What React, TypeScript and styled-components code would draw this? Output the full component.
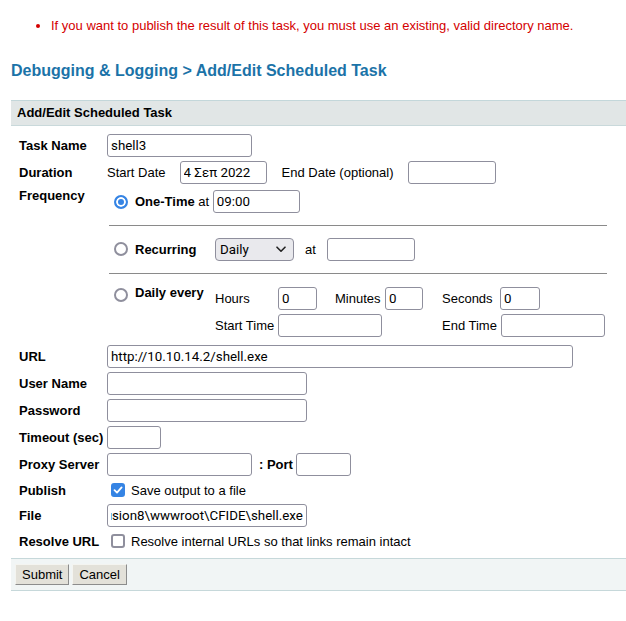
import React, { useEffect, useRef } from "react";
import styled, { createGlobalStyle } from "styled-components";

const GlobalStyle = createGlobalStyle`
  html, body { margin: 0; padding: 0; background: #fff; }
  body {
    font-family: "Liberation Sans", Arial, sans-serif;
    font-size: 13px;
    color: #000;
  }
`;

const Page = styled.div`
  padding: 18px 0 30px 11px;
`;

const Errors = styled.ul`
  margin: 0;
  padding-left: 40px;
  color: #d40000;
  line-height: 15px;
  li::marker { color: #d40000; }
`;

const Heading = styled.h2`
  margin: 28px 0 20px;
  font-size: 16px;
  line-height: 19px;
  font-weight: bold;
  color: #1b73a8;
`;

const Panel = styled.section`
  display: flex;
  flex-direction: column;
`;

const PanelTitle = styled.div`
  background: #e1e6e6;
  border-top: 1px solid #c3d7da;
  border-bottom: 1px solid #c9d9db;
  height: 24px;
  line-height: 24px;
  padding: 0 6px;
  font-weight: bold;
`;

const FormGrid = styled.div`
  display: grid;
  grid-template-columns: 88px 1fr;
  row-gap: 4px;
  padding: 8px 0 7px 8px;
`;

const Label = styled.div<{ $top?: boolean }>`
  font-weight: bold;
  line-height: 15px;
  align-self: ${(p) => (p.$top ? "start" : "center")};
  white-space: nowrap;
`;

const Field = styled.div<{ $gap?: number; $h?: number }>`
  display: flex;
  align-items: center;
  min-height: ${(p) => p.$h ?? 23}px;
  gap: ${(p) => p.$gap ?? 0}px;
  white-space: nowrap;
`;

const TextInput = styled.input<{ $w: number; $ml?: number }>`
  box-sizing: border-box;
  width: ${(p) => p.$w}px;
  height: 23px;
  margin: 0 0 0 ${(p) => p.$ml ?? 0}px;
  padding: 0 3px;
  border: 1px solid #8f8f9d;
  border-radius: 3px;
  background: #fff;
  color: #000;
  font-family: Roboto, "Noto Sans", sans-serif;
  font-size: 13.33px;
  outline: none;
`;

const Bold = styled.span<{ $ml?: number }>`
  font-weight: bold;
  margin-left: ${(p) => p.$ml ?? 0}px;
`;

const Text = styled.span<{ $ml?: number; $mr?: number }>`
  margin-left: ${(p) => p.$ml ?? 0}px;
  margin-right: ${(p) => p.$mr ?? 0}px;
`;

/* Frequency block */
const Freq = styled.div`
  margin-left: 2px;
  width: 498px;
  display: flex;
  flex-direction: column;
  padding-bottom: 4px;
`;

const OneTimeRow = styled.div`
  height: 27px;
  display: flex;
  align-items: center;
  padding-left: 5px;
  white-space: nowrap;
`;

const Rule = styled.div`
  height: 1px;
  background: #8a8a8a;
  margin: 10px 0 9px;
`;

const ChoiceRow = styled.div<{ $h?: number }>`
  display: grid;
  grid-template-columns: 106px auto;
  align-items: ${(p) => (p.$h ? "center" : "start")};
  height: ${(p) => (p.$h ? `${p.$h}px` : "auto")};
  padding-top: ${(p) => (p.$h ? 0 : 4)}px;
`;

const Choice = styled.div<{ $top?: boolean }>`
  display: flex;
  align-items: ${(p) => (p.$top ? "flex-start" : "center")};
  padding-left: 5px;
  margin-top: ${(p) => (p.$top ? -2 : 0)}px;
  line-height: 15px;
  white-space: nowrap;
`;

const Radio = styled.input.attrs({ type: "radio" })<{ $mt?: number }>`
  appearance: none;
  -webkit-appearance: none;
  box-sizing: border-box;
  width: 14px;
  height: 14px;
  margin: ${(p) => p.$mt ?? 0}px 7px 0 0;
  border-radius: 50%;
  border: 2px solid #8f8f9d;
  background: #fff;
  flex: none;
  &:checked {
    border-color: #3584e4;
    background: #3584e4;
    box-shadow: inset 0 0 0 2px #fff;
  }
`;

const RecurControls = styled.div`
  display: flex;
  align-items: center;
`;

const SelectWrap = styled.div`
  position: relative;
  width: 79px;
  height: 23px;
  margin-right: 11px;
`;

const Select = styled.select`
  appearance: none;
  -webkit-appearance: none;
  box-sizing: border-box;
  width: 79px;
  height: 23px;
  margin: 0;
  padding: 0 4px;
  border: 1px solid #8f8f9d;
  border-radius: 4px;
  background: #e9e9ed;
  color: #000;
  font-family: Roboto, "Noto Sans", sans-serif;
  font-size: 13.33px;
`;

const Chevron = styled.svg`
  position: absolute;
  right: 8px;
  top: 8px;
  pointer-events: none;
`;

const DailyGrid = styled.div`
  display: grid;
  grid-template-columns: 63px 57px 50px 57px 58px auto;
  grid-auto-rows: 23px;
  row-gap: 4px;
  align-items: center;
  white-space: nowrap;
`;

const Span3 = styled.div`
  grid-column: span 3;
  display: flex;
`;

const Box = styled.span<{ $on?: boolean }>`
  box-sizing: border-box;
  width: 14px;
  height: 14px;
  margin: 0 6px 0 4px;
  border-radius: 3px;
  border: 2px solid ${(p) => (p.$on ? "#3584e4" : "#8f8f9d")};
  background: ${(p) => (p.$on ? "#3584e4" : "#fff")};
  display: flex;
  align-items: center;
  justify-content: center;
  flex: none;
`;

const Footer = styled.div`
  display: flex;
  gap: 3px;
  padding: 5px 4px 5px;
  background: #f1f5f5;
  border-top: 1px solid #c6d8da;
  border-bottom: 1px solid #c6d8da;
`;

const Button = styled.button`
  box-sizing: border-box;
  height: 21px;
  padding: 0 6px;
  margin: 0;
  font-family: "Liberation Sans", Arial, sans-serif;
  font-size: 13px;
  color: #000;
  background: #e3e1d9;
  border: 1px solid;
  border-color: #f4f4f0 #8c8c8c #8c8c8c #f4f4f0;
  border-radius: 0;
`;

function CheckBox({ on }: { on?: boolean }) {
  return (
    <Box $on={on}>
      {on && (
        <svg width="10" height="10" viewBox="0 0 10 10">
          <path d="M1.5 5.2 L4 7.6 L8.6 2.4" fill="none" stroke="#fff" strokeWidth="1.8" strokeLinecap="round" strokeLinejoin="round" />
        </svg>
      )}
    </Box>
  );
}

export default function App() {
  const fileRef = useRef<HTMLInputElement>(null);
  useEffect(() => {
    const el = fileRef.current;
    if (el) el.scrollLeft = el.scrollWidth;
  }, []);

  return (
    <Page>
      <GlobalStyle />
      <Errors>
        <li>If you want to publish the result of this task, you must use an existing, valid directory name.</li>
      </Errors>
      <Heading>Debugging &amp; Logging &gt; Add/Edit Scheduled Task</Heading>
      <Panel>
        <PanelTitle>Add/Edit Scheduled Task</PanelTitle>
        <FormGrid>
          <Label>Task Name</Label>
          <Field>
            <TextInput $w={145} defaultValue="shell3" />
          </Field>

          <Label>Duration</Label>
          <Field $gap={14}>
            <Text>Start Date</Text>
            <TextInput $w={87} defaultValue="4 Σεπ 2022" />
            <Text $ml={1}>End Date (optional)</Text>
            <TextInput $w={88} />
          </Field>

          <Label $top>Frequency</Label>
          <Freq>
            <OneTimeRow>
              <Radio name="freq" defaultChecked />
              <Bold>One-Time</Bold>
              <Text>&nbsp;at&nbsp;</Text>
              <TextInput $w={87} defaultValue="09:00" />
            </OneTimeRow>
            <Rule />
            <ChoiceRow $h={28}>
              <Choice>
                <Radio name="freq" />
                <Bold>Recurring</Bold>
              </Choice>
              <RecurControls>
                <SelectWrap>
                  <Select defaultValue="Daily">
                    <option>Daily</option>
                    <option>Weekly</option>
                    <option>Monthly</option>
                  </Select>
                  <Chevron width="10" height="7" viewBox="0 0 10 7">
                    <path d="M1 1.2 L5 5.2 L9 1.2" fill="none" stroke="#222" strokeWidth="1.6" strokeLinecap="round" strokeLinejoin="round" />
                  </Chevron>
                </SelectWrap>
                <Text $mr={11}>at</Text>
                <TextInput $w={88} />
              </RecurControls>
            </ChoiceRow>
            <Rule />
            <ChoiceRow>
              <Choice $top>
                <Radio name="freq" $mt={3} />
                <Bold>Daily every</Bold>
              </Choice>
              <DailyGrid>
                <Text>Hours</Text>
                <TextInput $w={39} defaultValue="0" />
                <Text>Minutes</Text>
                <TextInput $w={38} defaultValue="0" />
                <Text>Seconds</Text>
                <TextInput $w={40} defaultValue="0" />
                <Text>Start Time</Text>
                <Span3>
                  <TextInput $w={104} />
                </Span3>
                <Text>End Time</Text>
                <TextInput $w={104} $ml={1} />
              </DailyGrid>
            </ChoiceRow>
          </Freq>

          <Label>URL</Label>
          <Field>
            <TextInput $w={466} defaultValue="http://10.10.14.2/shell.exe" />
          </Field>

          <Label>User Name</Label>
          <Field>
            <TextInput $w={200} />
          </Field>

          <Label>Password</Label>
          <Field>
            <TextInput $w={200} type="password" />
          </Field>

          <Label>Timeout (sec)</Label>
          <Field>
            <TextInput $w={54} />
          </Field>

          <Label>Proxy Server</Label>
          <Field>
            <TextInput $w={145} />
            <Bold $ml={7}>: Port</Bold>
            <TextInput $w={55} $ml={3} />
          </Field>

          <Label>Publish</Label>
          <Field $h={20}>
            <CheckBox on />
            <Text>Save output to a file</Text>
          </Field>

          <Label>File</Label>
          <Field>
            <TextInput ref={fileRef} $w={200} defaultValue="C:\ColdFusion8\wwwroot\CFIDE\shell.exe" />
          </Field>

          <Label>Resolve URL</Label>
          <Field $h={20}>
            <CheckBox />
            <Text>Resolve internal URLs so that links remain intact</Text>
          </Field>
        </FormGrid>
        <Footer>
          <Button>Submit</Button>
          <Button>Cancel</Button>
        </Footer>
      </Panel>
    </Page>
  );
}
